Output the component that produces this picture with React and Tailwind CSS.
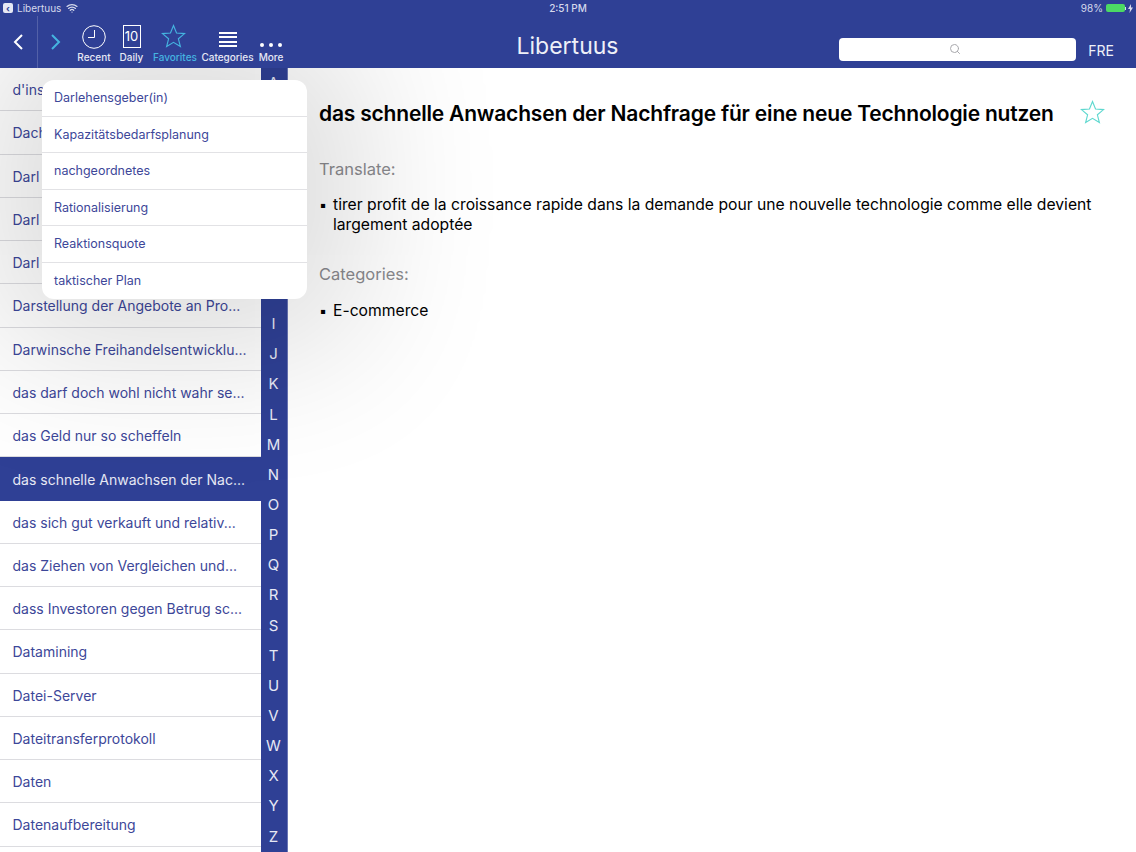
import { Search, Wifi } from "lucide-react";

const font = { fontFamily: "Inter, 'Noto Sans', 'Liberation Sans', sans-serif" };

const words = [
  "d'ins",
  "Dach",
  "Darl",
  "Darl",
  "Darl",
  "Darstellung der Angebote an Pro...",
  "Darwinsche Freihandelsentwicklu...",
  "das darf doch wohl nicht wahr se...",
  "das Geld nur so scheffeln",
  "das schnelle Anwachsen der Nac...",
  "das sich gut verkauft und relativ...",
  "das Ziehen von Vergleichen und...",
  "dass Investoren gegen Betrug sc...",
  "Datamining",
  "Datei-Server",
  "Dateitransferprotokoll",
  "Daten",
  "Datenaufbereitung",
];

const favorites = [
  "Darlehensgeber(in)",
  "Kapazitätsbedarfsplanung",
  "nachgeordnetes",
  "Rationalisierung",
  "Reaktionsquote",
  "taktischer Plan",
];

const letters = "ABCDEFGHIJKLMNOPQRSTUVWXYZ".split("");

function StarIcon({ className }) {
  return (
    <svg className={className} viewBox="0 0 24 24" fill="none" stroke="currentColor" strokeWidth="1.1" strokeLinejoin="miter">
      <path d="M12 1.5l2.9 7.2 7.7.5-5.9 5 1.9 7.5L12 17.6l-6.6 4.1 1.9-7.5-5.9-5 7.7-.5z" />
    </svg>
  );
}

function ToolItem({ label, className, active, children }) {
  return (
    <div className={`flex flex-col items-center ${className}`}>
      <div className={`h-[28px] flex items-end justify-center ${active ? "text-[#45b4e0]" : "text-white"}`}>{children}</div>
      <span className={`text-[10px] leading-[12px] font-medium whitespace-nowrap ${active ? "text-[#45b4e0]" : "text-[#e6e8f4]"}`}>
        {label}
      </span>
    </div>
  );
}

function Header() {
  return (
    <div className="relative z-20 h-[68px] shrink-0 bg-[#2f4095] text-white">
      <div className="h-[16px] px-[3px] flex items-center justify-between text-[10px] text-[#d5d9ec]">
        <div className="flex items-center w-[300px]">
          <span className="w-[10px] h-[10px] rounded-[2px] bg-[#e6e8f4] text-[#2f4095] flex items-center justify-center text-[9px] leading-none font-bold">
            ‹
          </span>
          <span className="ml-[4px]">Libertuus</span>
          <Wifi className="ml-[5px] w-[12px] h-[12px]" strokeWidth={2.5} />
        </div>
        <span className="font-medium">2:51 PM</span>
        <div className="flex items-center justify-end w-[300px]">
          <span>98%</span>
          <span className="ml-[3px] w-[19px] h-[8px] rounded-[2px] bg-[#4cd964]" />
          <span className="w-[1px] h-[3px] bg-[#d5d9ec]" />
          <svg className="ml-[2px] w-[5px] h-[9px]" viewBox="0 0 5 9" fill="currentColor">
            <path d="M3 0L0 5h2L1.500 9 5 3.500H3z" />
          </svg>
        </div>
      </div>
      <div className="h-[52px] flex items-center">
        <div className="w-[38px] h-full border-r border-[#5361a8] flex items-center justify-center pr-[1px]">
          <svg className="w-[12px] h-[18px]" viewBox="0 0 12 18" fill="none" stroke="currentColor" strokeWidth="2">
            <path d="M10 2L3 9l7 7" />
          </svg>
        </div>
        <div className="w-[34px] flex items-center justify-center pl-[1px] text-[#45b4e0]">
          <svg className="w-[12px] h-[18px]" viewBox="0 0 12 18" fill="none" stroke="currentColor" strokeWidth="2">
            <path d="M2 2l7 7-7 7" />
          </svg>
        </div>
        <div className="flex items-start h-full pt-[7px]">
          <ToolItem label="Recent" className="w-[44px]">
            <svg className="w-[24px] h-[24px] mb-[2px]" viewBox="0 0 24 24" fill="none" stroke="currentColor" strokeWidth="1">
              <circle cx="12" cy="12" r="11.300" />
              <path d="M12.500 5v7.500H6" />
            </svg>
          </ToolItem>
          <ToolItem label="Daily" className="w-[31px]">
            <div className="w-[18px] h-[23px] mb-[3px] border border-white flex items-center justify-center text-[13px] leading-none">10</div>
          </ToolItem>
          <ToolItem label="Favorites" className="w-[52px] ml-[2px]" active>
            <StarIcon className="w-[25px] h-[25px] mb-[2px] mr-[4px]" />
          </ToolItem>
          <ToolItem label="Categories" className="w-[53px]">
            <div className="w-[18px] mb-[4px] flex flex-col gap-[2.500px]">
              <span className="h-[2px] bg-white" />
              <span className="h-[2px] bg-white" />
              <span className="h-[2px] bg-white" />
              <span className="h-[2px] bg-white" />
            </div>
          </ToolItem>
          <ToolItem label="More" className="w-[34px]">
            <div className="flex gap-[5px] mb-[4px]">
              <span className="w-[4px] h-[4px] rounded-full bg-white" />
              <span className="w-[4px] h-[4px] rounded-full bg-white" />
              <span className="w-[4px] h-[4px] rounded-full bg-white" />
            </div>
          </ToolItem>
        </div>
        <div className="absolute left-0 right-0 top-[16px] h-[52px] flex items-center justify-center pointer-events-none">
          <span className="text-[23px] font-normal text-[#eef0f8] mt-[9px] mr-[1px]">Libertuus</span>
        </div>
        <div className="ml-auto flex items-center mt-[14px]">
          <div className="w-[237px] h-[23px] rounded-[4px] bg-white flex items-center justify-center pr-[6px] text-[#a9a9ad]">
            <Search className="w-[12px] h-[12px]" />
          </div>
          <span className="w-[60px] text-center text-[14px] text-[#eef0f8] pr-[10px] mt-[2px]">FRE</span>
        </div>
      </div>
    </div>
  );
}

function WordList() {
  return (
    <div className="w-[261px] shrink-0">
      {words.map((w, i) => (
        <div
          key={i}
          className={`h-[43.250px] pl-[12.500px] pt-[1px] flex items-center whitespace-nowrap overflow-hidden text-[14px] ${
            i === 9 ? "bg-[#2f4095] text-[#e6e8f4]" : "border-b border-[#dcdce0] text-[#3d4799]"
          }`}
        >
          {w}
        </div>
      ))}
    </div>
  );
}

function IndexBar() {
  return (
    <div className="w-[27px] shrink-0 bg-[#2f4095] border-r border-[#6a76b5] flex flex-col items-center pr-[1px] text-[#e6e8f4] text-[15px]">
      {letters.map((l) => (
        <span key={l} className="h-[30.15px] leading-[30.150px]">
          {l}
        </span>
      ))}
    </div>
  );
}

function Detail() {
  return (
    <div className="flex-1 min-w-0 pl-[31px] pr-[31px] pt-[32px] text-black">
      <div className="flex items-start justify-between">
        <h1 className="text-[21px] leading-[28px] tracking-[-0.19px] font-semibold whitespace-nowrap">
          das schnelle Anwachsen der Nachfrage für eine neue Technologie nutzen
        </h1>
        <StarIcon className="w-[25px] h-[25px] text-[#5fd8cf]" />
      </div>
      <h2 className="mt-[29px] text-[16.500px] leading-[24px] text-[#8a8a8e]">Translate:</h2>
      <div className="mt-[14px] flex text-[15.700px] leading-[20px]">
        <span className="w-[14px] shrink-0 text-[14.500px]">▪</span>
        <span>
          tirer profit de la croissance rapide dans la demande pour une nouvelle technologie comme elle devient largement adoptée
        </span>
      </div>
      <h2 className="mt-[27px] text-[16.500px] leading-[24px] text-[#8a8a8e]">Categories:</h2>
      <div className="mt-[15px] flex text-[15.700px] leading-[20px]">
        <span className="w-[14px] shrink-0 text-[14.500px]">▪</span>
        <span>E-commerce</span>
      </div>
    </div>
  );
}

function Popover() {
  return (
    <div className="absolute left-[42px] top-[12px] w-[265px] h-[219px] rounded-[12px] bg-white shadow-[0_0_150px_50px_rgba(0,0,0,0.14)] overflow-hidden">
      {favorites.map((f, i) => (
        <div
          key={f}
          className={`h-[36.500px] pl-[12px] pt-[1.500px] flex items-center text-[12.500px] text-[#3d4799] ${i < 5 ? "border-b border-[#e2e2e5]" : ""}`}
        >
          {f}
        </div>
      ))}
    </div>
  );
}

export default function App() {
  return (
    <div className="w-[1136px] h-[852px] flex flex-col bg-white overflow-hidden" style={font}>
      <Header />
      <div className="relative flex flex-1 min-h-0 overflow-hidden">
        <WordList />
        <IndexBar />
        <Detail />
        <Popover />
      </div>
    </div>
  );
}
